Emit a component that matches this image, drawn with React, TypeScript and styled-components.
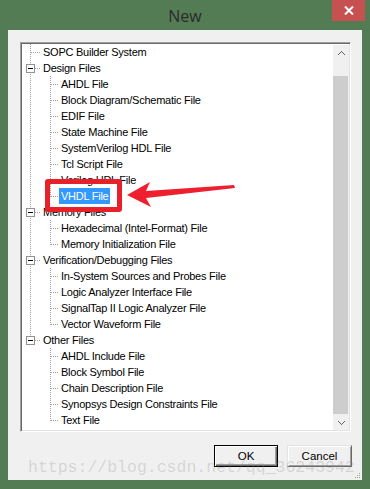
import React from "react";
import styled, { createGlobalStyle } from "styled-components";

const Global = createGlobalStyle`
  html, body { margin: 0; padding: 0; }
  body { background: #537c55; font-family: "Liberation Sans", Arial, sans-serif; }
  * { box-sizing: border-box; }
`;

const Window = styled.div`
  position: relative;
  width: 370px;
  height: 489px;
  background: #537c55;
  display: flex;
  flex-direction: column;
  overflow: hidden;
`;

const TitleBar = styled.div`
  height: 30px;
  display: grid;
  grid-template-columns: 1fr auto 1fr;
  align-items: center;
`;

const Title = styled.div`
  grid-column: 2;
  font-family: "Open Sans", "Noto Sans", sans-serif;
  font-size: 16px;
  color: #2b2b2b;
  line-height: 30px;
  padding-top: 1px;
`;

const CloseButton = styled.div`
  grid-column: 3;
  justify-self: end;
  align-self: start;
  margin-right: 5px;
  width: 33px;
  height: 21px;
  background: #c75050;
  display: flex;
  align-items: center;
  justify-content: center;
`;

const Client = styled.div`
  position: relative;
  flex: 1;
  margin: 0 8px 9px 8px;
  background: #f0f0f0;
  padding: 12px 10px 13px 12px;
  display: flex;
  flex-direction: column;
`;

const TreeBox = styled.div`
  width: 331px;
  height: 390px;
  border-style: solid;
  border-width: 1px;
  border-color: #a0a0a0 #ffffff #ffffff #a0a0a0;
  box-shadow: inset 1px 1px 0 #696969, inset -1px -1px 0 #e3e3e3;
  background: #ffffff;
  padding: 1px;
  display: flex;
`;

const TreeList = styled.div`
  flex: 1;
  display: flex;
  flex-direction: column;
`;

const Row = styled.div`
  height: 16px;
  display: flex;
  align-items: center;
  white-space: nowrap;
`;

const Label = styled.span<{ $selected?: boolean }>`
  font-family: "Liberation Sans", Arial, sans-serif;
  font-size: 11px;
  letter-spacing: -0.25px;
  line-height: 16px;
  height: 16px;
  padding: 0 2px;
  color: ${(p) => (p.$selected ? "#ffffff" : "#000000")};
  background: ${(p) => (p.$selected ? "#3399ff" : "transparent")};
`;

const ScrollBar = styled.div`
  width: 16px;
  display: flex;
  flex-direction: column;
  background: #f0f0f0;
  margin-top: 1px;
`;

const ScrollArrow = styled.div<{ $h: number }>`
  height: ${(p) => p.$h}px;
  display: flex;
  align-items: center;
  justify-content: center;
`;

const ScrollGap = styled.div<{ $h: number }>`
  height: ${(p) => p.$h}px;
`;

const Thumb = styled.div`
  flex: 1;
  background: #cdcdcd;
  margin-right: 1px;
`;

const ButtonRow = styled.div`
  margin-top: 13px;
  display: flex;
  justify-content: flex-end;
  gap: 9px;
`;

const Button = styled.button<{ $default?: boolean; $w: number }>`
  width: ${(p) => p.$w}px;
  height: 22px;
  padding: 0;
  margin: 0;
  font-family: "Liberation Sans", Arial, sans-serif;
  font-size: 11.5px;
  color: #000;
  background: #f0f0f0;
  border: 1px solid ${(p) => (p.$default ? "#000000" : "#e3e3e3")};
  border-right-color: ${(p) => (p.$default ? "#000000" : "#696969")};
  border-bottom-color: ${(p) => (p.$default ? "#000000" : "#696969")};
  box-shadow: ${(p) =>
    p.$default
      ? "inset 1px 1px 0 #ffffff, inset -1px -1px 0 #696969, inset -2px -2px 0 #a0a0a0"
      : "inset 1px 1px 0 #ffffff, inset -1px -1px 0 #a0a0a0"};
`;

const Grip = styled.svg`
  position: absolute;
  right: 1px;
  bottom: 1px;
`;

const Watermark = styled.div`
  position: absolute;
  left: 28px;
  top: 458px;
  font-family: "Liberation Mono", "Courier New", monospace;
  font-size: 16.5px;
  line-height: 20px;
  color: rgba(140, 140, 140, 0.28);
  white-space: nowrap;
  pointer-events: none;
`;

const Highlight = styled.div`
  position: absolute;
  left: 45px;
  top: 179px;
  width: 77px;
  height: 33px;
  border: 5px solid #e8202a;
  border-radius: 3px;
  pointer-events: none;
`;

const Arrow = styled.svg`
  position: absolute;
  left: 125px;
  top: 178px;
`;

type Item = {
  label: string;
  level: 0 | 1;
  group?: boolean;
  last?: boolean;
  parentLast?: boolean;
  selected?: boolean;
};

const items: Item[] = [
  { label: "SOPC Builder System", level: 0 },
  { label: "Design Files", level: 0, group: true },
  { label: "AHDL File", level: 1 },
  { label: "Block Diagram/Schematic File", level: 1 },
  { label: "EDIF File", level: 1 },
  { label: "State Machine File", level: 1 },
  { label: "SystemVerilog HDL File", level: 1 },
  { label: "Tcl Script File", level: 1 },
  { label: "Verilog HDL File", level: 1 },
  { label: "VHDL File", level: 1, last: true, selected: true },
  { label: "Memory Files", level: 0, group: true },
  { label: "Hexadecimal (Intel-Format) File", level: 1 },
  { label: "Memory Initialization File", level: 1, last: true },
  { label: "Verification/Debugging Files", level: 0, group: true },
  { label: "In-System Sources and Probes File", level: 1 },
  { label: "Logic Analyzer Interface File", level: 1 },
  { label: "SignalTap II Logic Analyzer File", level: 1 },
  { label: "Vector Waveform File", level: 1, last: true },
  { label: "Other Files", level: 0, group: true, last: true },
  { label: "AHDL Include File", level: 1, parentLast: true },
  { label: "Block Symbol File", level: 1, parentLast: true },
  { label: "Chain Description File", level: 1, parentLast: true },
  { label: "Synopsys Design Constraints File", level: 1, parentLast: true },
  { label: "Text File", level: 1, last: true, parentLast: true },
];

const DOT = "#a0a0a0";

function Connector({ item }: { item: Item }) {
  const w = item.level === 0 ? 19 : 37;
  return (
    <svg width={w} height={16} style={{ flex: "none" }} shapeRendering="crispEdges">
      {item.level === 0 ? (
        <>
          <line x1={8.5} y1={0} x2={8.5} y2={item.last ? 9 : 16} stroke={DOT} strokeDasharray="1 1" />
          <line x1={9} y1={8.5} x2={19} y2={8.5} stroke={DOT} strokeDasharray="1 1" />
          {item.group && (
            <>
              <rect x={4.5} y={4.5} width={8} height={8} fill="#fff" stroke="#919191" />
              <line x1={6} y1={8.5} x2={11} y2={8.5} stroke="#000" />
            </>
          )}
        </>
      ) : (
        <>
          {!item.parentLast && (
            <line x1={8.5} y1={0} x2={8.5} y2={16} stroke={DOT} strokeDasharray="1 1" />
          )}
          <line x1={28.5} y1={0} x2={28.5} y2={item.last ? 9 : 16} stroke={DOT} strokeDasharray="1 1" />
          <line x1={29} y1={8.5} x2={37} y2={8.5} stroke={DOT} strokeDasharray="1 1" />
        </>
      )}
    </svg>
  );
}

export default function App() {
  return (
    <>
      <Global />
      <Window>
        <TitleBar>
          <Title>New</Title>
          <CloseButton>
            <svg width="10" height="9" viewBox="0 0 10 9">
              <path d="M1 0.5 L9 8.5 M9 0.5 L1 8.5" stroke="#fff" strokeWidth="2" />
            </svg>
          </CloseButton>
        </TitleBar>
        <Client>
          <TreeBox>
            <TreeList>
              {items.map((it) => (
                <Row key={it.label}>
                  <Connector item={it} />
                  <Label $selected={it.selected}>{it.label}</Label>
                </Row>
              ))}
            </TreeList>
            <ScrollBar>
              <ScrollArrow $h={17}>
                <svg width="7" height="5" viewBox="0 0 7 5" shapeRendering="crispEdges">
                  <path d="M3 0h1v1h1v1h1v1h1v1h-1v-1h-1v-1h-1v-1h-1v1h-1v1h-1v1h-1v-1h1v-1h1v-1h1z" fill="#606060" />
                </svg>
              </ScrollArrow>
              <ScrollGap $h={14} />
              <Thumb />
              <ScrollArrow $h={16}>
                <svg width="7" height="5" viewBox="0 0 7 5" shapeRendering="crispEdges">
                  <path d="M3 5h1v-1h1v-1h1v-1h1v-1h-1v1h-1v1h-1v1h-1v-1h-1v-1h-1v-1h-1v1h1v1h1v1h1z" fill="#606060" />
                </svg>
              </ScrollArrow>
            </ScrollBar>
          </TreeBox>
          <ButtonRow>
            <Button $default $w={64}>OK</Button>
            <Button $w={65}>Cancel</Button>
          </ButtonRow>
          <Grip width="8" height="8" viewBox="0 0 8 8" shapeRendering="crispEdges">
            <rect x="6" y="2" width="1" height="1" fill="#a0a0a0" />
            <rect x="4" y="4" width="1" height="1" fill="#a0a0a0" />
            <rect x="6" y="4" width="1" height="1" fill="#a0a0a0" />
            <rect x="2" y="6" width="1" height="1" fill="#a0a0a0" />
            <rect x="4" y="6" width="1" height="1" fill="#a0a0a0" />
            <rect x="6" y="6" width="1" height="1" fill="#a0a0a0" />
          </Grip>
        </Client>
        <Highlight />
        <Arrow width="112" height="32" viewBox="0 0 112 32">
          <polygon
            points="2,17 25,4 21,13 109,7 110,10 21,20 26,29"
            fill="#ee2030"
          />
        </Arrow>
        <Watermark>https://blog.csdn.net/qq_36243942</Watermark>
      </Window>
    </>
  );
}
